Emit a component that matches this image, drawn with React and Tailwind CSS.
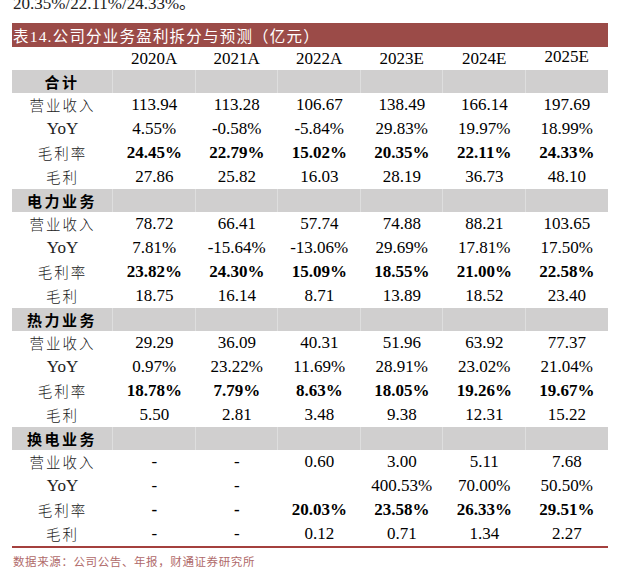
import React from "react";

const years = ["2020A", "2021A", "2022A", "2023E", "2024E", "2025E"];

const sections = [
  {
    name: "合计",
    rows: [
      ["营业收入", ["113.94", "113.28", "106.67", "138.49", "166.14", "197.69"]],
      ["YoY", ["4.55%", "-0.58%", "-5.84%", "29.83%", "19.97%", "18.99%"]],
      ["毛利率", ["24.45%", "22.79%", "15.02%", "20.35%", "22.11%", "24.33%"], true],
      ["毛利", ["27.86", "25.82", "16.03", "28.19", "36.73", "48.10"]],
    ],
  },
  {
    name: "电力业务",
    rows: [
      ["营业收入", ["78.72", "66.41", "57.74", "74.88", "88.21", "103.65"]],
      ["YoY", ["7.81%", "-15.64%", "-13.06%", "29.69%", "17.81%", "17.50%"]],
      ["毛利率", ["23.82%", "24.30%", "15.09%", "18.55%", "21.00%", "22.58%"], true],
      ["毛利", ["18.75", "16.14", "8.71", "13.89", "18.52", "23.40"]],
    ],
  },
  {
    name: "热力业务",
    rows: [
      ["营业收入", ["29.29", "36.09", "40.31", "51.96", "63.92", "77.37"]],
      ["YoY", ["0.97%", "23.22%", "11.69%", "28.91%", "23.02%", "21.04%"]],
      ["毛利率", ["18.78%", "7.79%", "8.63%", "18.05%", "19.26%", "19.67%"], true],
      ["毛利", ["5.50", "2.81", "3.48", "9.38", "12.31", "15.22"]],
    ],
  },
  {
    name: "换电业务",
    rows: [
      ["营业收入", ["-", "-", "0.60", "3.00", "5.11", "7.68"]],
      ["YoY", ["-", "-", "", "400.53%", "70.00%", "50.50%"]],
      ["毛利率", ["-", "-", "20.03%", "23.58%", "26.33%", "29.51%"], true],
      ["毛利", ["-", "-", "0.12", "0.71", "1.34", "2.27"]],
    ],
  },
];

const serif = "font-['Liberation_Serif','Noto_Sans_CJK_SC',serif]";
const cjk = "font-['Noto_Sans_CJK_SC',sans-serif]";

export default function App() {
  return (
    <div className="w-[623px] h-[578px] bg-white overflow-hidden text-black">
      {/* cut-off line of text above the table */}
      <div className={`${serif} text-[17px] leading-[20px] -mt-[6px] ml-[13px] text-[#222]`}>
        20.35%/22.11%/24.33%。
      </div>

      <div className="ml-[12px] w-[596px] mt-[9px]">
        {/* title bar */}
        <div className={`${cjk} h-[24px] bg-[#9b4b48] text-white text-[15.5px] leading-[24px] tracking-[1.2px] pl-[1px]`}>
          表<span className={serif}>14.</span>公司分业务盈利拆分与预测（亿元）
        </div>

        {/* year header */}
        <div className={`${serif} grid grid-cols-[101px_repeat(6,1fr)] h-[23px] text-[17px] leading-[23px] text-center`}>
          <div />
          {years.map((y, i) => (
            <div key={y} className={i === 5 ? "-mt-[2px]" : ""}>{y}</div>
          ))}
        </div>

        {sections.map((s) => (
          <div key={s.name}>
            <div className="grid grid-cols-[101px_repeat(6,1fr)] h-[23px] bg-[#d0cfcf]">
              <div className={`${cjk} font-bold text-[15px] leading-[23px] tracking-[2.5px] text-center border-r border-[#dedede]`}>
                {s.name}
              </div>
              {years.map((y, i) => (
                <div key={y} className={i < 5 ? "border-r border-[#dedede]" : ""} />
              ))}
            </div>
            {s.rows.map(([label, vals, bold]) => (
              <div key={label} className="grid grid-cols-[101px_repeat(6,1fr)] h-[24px] text-center">
                <div className={`${label === "YoY" ? serif + " text-[17px]" : cjk + " text-[14.5px] tracking-[2px] font-light"} leading-[24px] text-[#222]`}>
                  {label}
                </div>
                {vals.map((v, i) => (
                  <div key={i} className={`${serif} text-[17px] leading-[24px] ${bold ? "font-bold" : ""}`}>
                    {v}
                  </div>
                ))}
              </div>
            ))}
          </div>
        ))}

        <div className="h-[2px] bg-[#a4403e]" />
        <div className={`${cjk} text-[11.5px] leading-[26px] tracking-[0.6px] text-[#b06a6a] pl-[1px]`}>
          数据来源：公司公告、年报，财通证券研究所
        </div>
      </div>
    </div>
  );
}
